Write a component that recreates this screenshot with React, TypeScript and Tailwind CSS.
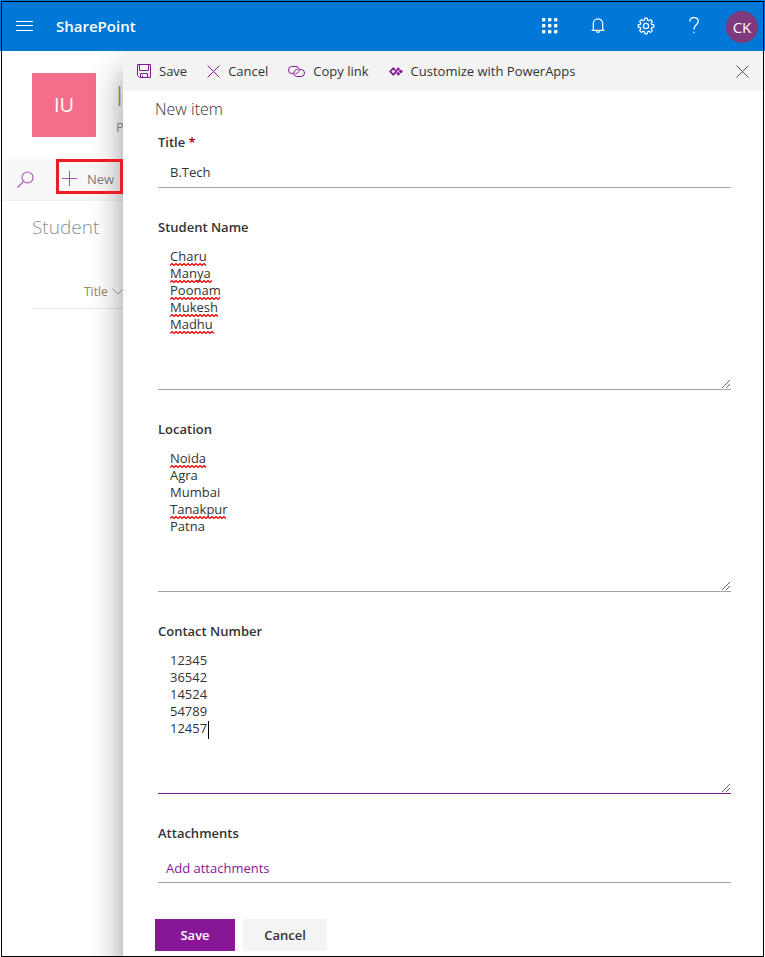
import { useState } from "react";
import type { ReactNode } from "react";

function HamburgerIcon() {
  return (
    <svg width="17" height="10" viewBox="0 0 17 10" stroke="#fff" aria-hidden="true">
      <path d="M0 .5h17M0 4.5h17M0 9.5h17" />
    </svg>
  );
}

function WaffleIcon() {
  const dots = [0, 6, 12];
  return (
    <svg width="16" height="16" viewBox="0 0 16 16" fill="#fff" aria-hidden="true">
      {dots.map((y) => dots.map((x) => <rect key={`${x}-${y}`} x={x} y={y} width="3.4" height="3.4" rx=".8" />))}
    </svg>
  );
}

function BellIcon() {
  return (
    <svg width="14" height="16" viewBox="0 0 14 16" fill="none" stroke="#fff" strokeWidth="1.2" aria-hidden="true">
      <path d="M2.3 12.3V5.6a4.7 4.7 0 0 1 9.4 0v6.7M.6 12.4h12.8M5.2 12.6a1.8 1.8 0 0 0 3.6 0" />
    </svg>
  );
}

function GearIcon() {
  return (
    <svg width="18" height="18" viewBox="0 0 18 18" fill="none" stroke="#fff" strokeWidth="1.2" strokeLinejoin="round" aria-hidden="true">
      <path d="M7.8 1.2h2.4l.4 2.1 1.2.5 1.8-1.2 1.8 1.8-1.2 1.8.5 1.2 2.1.4v2.4l-2.1.4-.5 1.2 1.2 1.8-1.8 1.8-1.8-1.2-1.2.5-.4 2.1H7.8l-.4-2.1-1.2-.5-1.8 1.2-1.8-1.8 1.2-1.8-.5-1.2-2.1-.4V7.8l2.1-.4.5-1.2-1.2-1.8 1.8-1.8 1.8 1.2 1.2-.5z" />
      <circle cx="9" cy="9" r="2.6" />
    </svg>
  );
}

function HelpIcon() {
  return (
    <svg width="10" height="17" viewBox="0 0 10 17" fill="none" stroke="#fff" strokeWidth="1.3" aria-hidden="true">
      <path d="M.9 4.6C.9 2.2 2.6.7 5 .7s4.2 1.400 4.200 3.700c0 3.300-4.200 3.600-4.200 7.400v.7" />
      <path d="M5 14.800v1.500" />
    </svg>
  );
}

function SaveIcon() {
  return (
    <svg width="14" height="14" viewBox="0 0 14 14" fill="none" stroke="#881798" aria-hidden="true">
      <path d="M.5.5h13v13H2.500l-2-2zM2.500.5v6h9v-6M3.500 13.500v-4h7v4M5.500 13.500v-2" />
    </svg>
  );
}

function CrossIcon({ stroke }: { stroke: string }) {
  return (
    <svg width="13" height="13" viewBox="0 0 13 13" fill="none" stroke={stroke} aria-hidden="true">
      <path d="M.5.5l12 12M12.500.5l-12 12" />
    </svg>
  );
}

function LinkIcon() {
  return (
    <svg width="17" height="11" viewBox="0 0 17 11" fill="none" stroke="#881798" aria-hidden="true">
      <path d="M5.500 7.500H3.500a3 3.500 0 0 1 0-7h4.500a3.500 3.500 0 0 1 1.500 6.500" />
      <path d="M11.500 3.500H13a3.500 3.500 0 0 1 0 7H8.500A3.500 3.500 0 0 1 7 4.500" />
      <path d="M9.500 7C8.900 7.400 8.300 7.500 7.500 7.500M7 4.500c.7-.7 1.500-1 2.500-1" />
    </svg>
  );
}

function PowerAppsIcon() {
  return (
    <svg width="14" height="9" viewBox="0 0 14 9" aria-hidden="true">
      <path d="M4.300 1.300L7.400 4.500 4.300 7.700 1.200 4.500z" fill="none" stroke="#881798" strokeWidth="1.700" />
      <g fill="#881798">
        <path d="M9.200.2l2 2-2 2-2-2zM9.200 4.800l2 2-2 2-2-2zM11.900 2.400L14 4.500l-2.100 2.100-2.100-2.100z" />
      </g>
    </svg>
  );
}

function SearchIcon() {
  return (
    <svg width="17" height="17" viewBox="0 0 17 17" fill="none" stroke="#a653b1" strokeWidth="1.100" aria-hidden="true">
      <circle cx="10.500" cy="6.500" r="5.500" />
      <path d="M6.600 10.400L.5 16.500" />
    </svg>
  );
}

function PlusIcon() {
  return (
    <svg width="15" height="15" viewBox="0 0 15 15" stroke="#a653b1" aria-hidden="true">
      <path d="M7.500 0v15M0 7.500h15" />
    </svg>
  );
}

function ResizeGrip() {
  return (
    <svg className="pointer-events-none absolute right-px bottom-0.5" width="8" height="8" viewBox="0 0 8 8" stroke="#555" strokeWidth=".9" aria-hidden="true">
      <path d="M0 8L8 0M4 8l4-4" />
    </svg>
  );
}

function HeaderButton({ label, children }: { label: string; children: ReactNode }) {
  return (
    <button type="button" aria-label={label} className="flex h-full w-12 items-center justify-center">
      {children}
    </button>
  );
}

function Command({ icon, children }: { icon: ReactNode; children: ReactNode }) {
  return (
    <button type="button" className="flex shrink-0 items-center gap-2 whitespace-nowrap">
      {icon}
      {children}
    </button>
  );
}

function Squiggle({ width }: { width: number }) {
  const points = Array.from({ length: Math.floor(width / 2) + 1 }, (_, i) => `${i * 2},${i % 2 ? 0.5 : 2.5}`).join(" ");
  return (
    <svg width={width} height="3" viewBox={`0 0 ${width} 3`} fill="none" stroke="#f00000" strokeWidth="1.200">
      <polyline points={points} />
    </svg>
  );
}

type MultilineProps = {
  id: string;
  label: string;
  initial: string;
  marks?: number[];
  active?: boolean;
};

function MultilineField({ id, label, initial, marks = [], active = false }: MultilineProps) {
  const [value, setValue] = useState(initial);
  return (
    <div>
      <label htmlFor={id} className="block h-[21px] font-semibold">
        {label}
      </label>
      <div className="relative">
        <textarea
          id={id}
          value={value}
          onChange={(e) => setValue(e.target.value)}
          spellCheck={false}
          className={`block h-[152px] w-full resize-none border-b px-3 pt-2.5 leading-[17px] outline-none ${active ? "border-[#881798]" : "border-[#a6a6a6]"}`}
        />
        {value === initial && (
          <div aria-hidden="true" className="pointer-events-none absolute top-[11px] left-3">
            {marks.map((width, i) => (
              <div key={i} className="flex h-[17px] items-end">
                {width > 0 && <Squiggle width={width} />}
              </div>
            ))}
            {active && <span className="absolute top-[68px] left-[38px] h-[18px] w-px bg-black" />}
          </div>
        )}
        <ResizeGrip />
      </div>
    </div>
  );
}

function SiteColumn() {
  return (
    <aside className="w-[123px] shrink-0 overflow-hidden whitespace-nowrap">
      <div className="flex h-[108px] gap-5 pt-[22px] pl-8">
        <div className="flex size-16 shrink-0 items-center justify-center bg-[#f46e8b] text-xl text-white">IU</div>
        <div className="pt-2">
          <div className="text-[28px] leading-7 font-light text-[#b08d70]">I</div>
          <div className="pt-2 text-[13px] text-[#8a93a8]">P</div>
        </div>
      </div>
      <div className="flex h-[42px] border-b border-[#f0f0f0] bg-[#f8f8f8]">
        <button type="button" aria-label="Search" className="flex w-14 items-center pl-[17px]">
          <SearchIcon />
        </button>
        <button type="button" className="relative z-20 flex h-[35px] w-[67px] items-center gap-2.5 border-3 border-[#ed1c24] pt-1 pl-[3px] text-[#777]">
          <PlusIcon />
          New
        </button>
      </div>
      <h1 className="pt-3 pl-8 text-[19px] leading-7 font-light text-[#85929a]">Student</h1>
      <div className="mt-[34px] ml-8 flex h-[34px] items-center gap-1 border-b border-[#e5e5e5] pl-[52px] text-xs text-[#a08058]">
        Title
        <svg className="shrink-0" width="12" height="7" viewBox="0 0 12 7" fill="none" stroke="#aaa" aria-hidden="true">
          <path d="M.5.5L6 6 11.500.5" />
        </svg>
      </div>
    </aside>
  );
}

export default function App() {
  const [title, setTitle] = useState("B.Tech");
  return (
    <div className="relative flex min-h-screen flex-col overflow-hidden bg-white font-['Open_Sans','Noto_Sans',sans-serif] text-[13px] leading-5 text-[#333]">
      <header className="relative z-30 flex h-[51px] items-center bg-[#0078d7] pr-[7px] pl-4 text-white">
        <button type="button" aria-label="Menu">
          <HamburgerIcon />
        </button>
        <span className="ml-[23px] text-[15px] font-semibold">SharePoint</span>
        <div className="ml-auto flex h-full items-center">
          <HeaderButton label="App launcher"><WaffleIcon /></HeaderButton>
          <HeaderButton label="Notifications"><BellIcon /></HeaderButton>
          <HeaderButton label="Settings"><GearIcon /></HeaderButton>
          <HeaderButton label="Help"><HelpIcon /></HeaderButton>
          <button type="button" aria-label="Account" className="mt-0.5 ml-2 flex size-8 items-center justify-center rounded-full bg-[#80397b] text-[15px]">
            CK
          </button>
        </div>
      </header>

      <div className="flex flex-1">
        <SiteColumn />
        <main className="relative z-10 min-w-0 flex-1 bg-white shadow-[5px_25px_30px_5px_rgba(0,0,0,0.42)]">
          <div className="flex h-10 items-center gap-5 bg-[#f3f3f3] pr-4 pl-3.5">
            <Command icon={<SaveIcon />}>Save</Command>
            <Command icon={<CrossIcon stroke="#881798" />}>Cancel</Command>
            <Command icon={<LinkIcon />}>Copy link</Command>
            <Command icon={<PowerAppsIcon />}>Customize with PowerApps</Command>
            <button type="button" aria-label="Close" className="ml-auto">
              <CrossIcon stroke="#555" />
            </button>
          </div>

          <form onSubmit={(e) => e.preventDefault()} className="pr-[34px] pb-1.5 pl-8">
            <h2 className="h-[41px] pt-1.5 text-base font-light">New item</h2>
            <div className="flex flex-col gap-[29px] pl-[3px]">
              <div>
                <label htmlFor="title" className="block h-[21px] font-semibold">
                  Title <span className="text-[#a80000]">*</span>
                </label>
                <input
                  id="title"
                  value={title}
                  onChange={(e) => setTitle(e.target.value)}
                  className="block h-[35px] w-full border-b border-[#a6a6a6] px-3 pt-1 outline-none"
                />
              </div>
              <MultilineField id="student" label="Student Name" initial={"Charu\nManya\nPoonam\nMukesh\nMadhu"} marks={[37, 42, 51, 49, 44]} />
              <MultilineField id="location" label="Location" initial={"Noida\nAgra\nMumbai\nTanakpur\nPatna"} marks={[37, 0, 0, 56, 0]} />
              <MultilineField id="contact" label="Contact Number" initial={"12345\n36542\n14524\n54789\n12457"} active />
              <div>
                <h3 className="h-[21px] font-semibold">Attachments</h3>
                <div className="flex h-[39px] items-center border-b border-[#a6a6a6] px-2 pt-2.5">
                  <button type="button" className="text-[#881798]">Add attachments</button>
                </div>
              </div>
            </div>
            <div className="mt-9 flex gap-2 font-semibold">
              <button type="submit" className="h-8 w-20 bg-[#881798] text-white">Save</button>
              <button type="button" className="h-8 w-[84px] bg-[#f4f4f4]">Cancel</button>
            </div>
          </form>
        </main>
      </div>

      <div aria-hidden="true" className="pointer-events-none absolute inset-x-px top-px bottom-0 z-40 border border-black" />
    </div>
  );
}
